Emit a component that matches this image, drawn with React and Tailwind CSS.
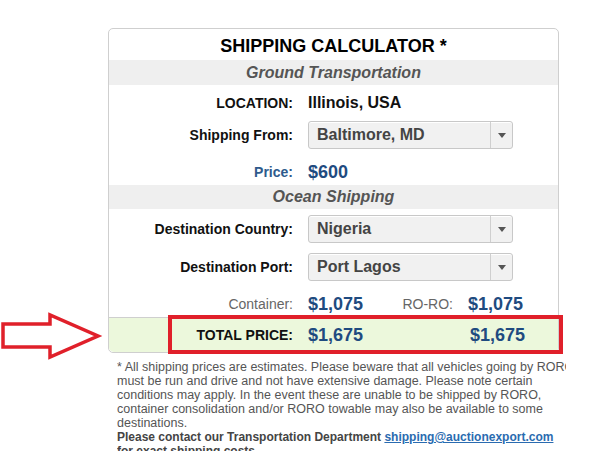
import React from "react";

function Select({ value }) {
  return (
    <div className="flex h-[28px] w-[205px] items-stretch rounded-[3px] border border-[#c8c8c8] bg-[#f1f1f1] shadow-[inset_0_1px_0_#fff]">
      <div className="flex flex-1 items-center pl-[8px] text-[16px] font-bold text-[#444]">{value}</div>
      <div className="flex w-[22px] items-center justify-center border-l border-[#cfcfcf]">
        <svg width="8" height="5" viewBox="0 0 8 5">
          <path d="M0 0 L8 0 L4 5 Z" fill="#555" />
        </svg>
      </div>
    </div>
  );
}

function Row({ label, labelClass, children, className }) {
  return (
    <div className={"flex items-center " + className}>
      <div className={"w-[184px] shrink-0 text-right " + labelClass}>{label}</div>
      <div className="ml-[15px] flex items-center">{children}</div>
    </div>
  );
}

const labelBold = "text-[14px] font-bold text-[#111]";
const money = "text-[18px] font-bold text-[#1f4b80]";

export default function App() {
  return (
    <div className="relative h-[462px] w-[595px] overflow-hidden bg-white font-['Liberation_Sans',Arial,sans-serif]">
      {/* red arrow annotation */}
      <svg className="absolute left-0 top-[305px]" width="104" height="60" viewBox="0 305 104 60">
        <path
          d="M3 324 L50 324 L50 315 L98 336 L50 357 L50 347 L3 347 Z"
          fill="#fff"
          stroke="#e0202a"
          strokeWidth="3.5"
        />
      </svg>

      <div className="ml-[108px] pt-[28px]">
        <div className="relative w-[451px] rounded-[5px] border border-[#cfcfcf]">
          <div className="flex h-[31px] items-center justify-center pt-[3px] text-[18px] font-bold text-black">
            SHIPPING CALCULATOR *
          </div>
          <div className="flex h-[25px] items-center justify-center bg-[#efefef] text-[16px] font-bold italic text-[#555]">
            Ground Transportation
          </div>

          <Row label="LOCATION:" labelClass={labelBold} className="mt-[8px] h-[20px]">
            <span className="text-[16px] font-bold text-[#111]">Illinois, USA</span>
          </Row>
          <Row label="Shipping From:" labelClass={labelBold} className="mt-[8px] h-[28px]">
            <Select value="Baltimore, MD" />
          </Row>
          <Row label="Price:" labelClass="text-[14px] font-bold text-[#2e5a8c]" className="mt-[12px] h-[22px]">
            <span className={money}>$600</span>
          </Row>

          <div className="mt-[2px] flex h-[24px] items-center justify-center bg-[#efefef] text-[16px] font-bold italic text-[#555]">
            Ocean Shipping
          </div>

          <Row label="Destination Country:" labelClass={labelBold} className="mt-[6px] h-[28px]">
            <Select value="Nigeria" />
          </Row>
          <Row label="Destination Port:" labelClass={labelBold} className="mt-[10px] h-[28px]">
            <Select value="Port Lagos" />
          </Row>

          <div className="mt-[12px] flex h-[22px] items-center">
            <div className="w-[184px] shrink-0 text-right text-[14px] text-[#666]">Container:</div>
            <div className={"ml-[15px] w-[89px] " + money}>$1,075</div>
            <div className="w-[56px] whitespace-nowrap text-right text-[14px] text-[#666]">RO-RO:</div>
            <div className={"ml-[15px] " + money}>$1,075</div>
          </div>

          <div className="mt-[2px] flex h-[35px] items-center rounded-b-[5px] border-t border-[#cfcfcf] bg-[#ecf8dc]">
            <div className="w-[184px] shrink-0 text-right text-[14px] font-bold text-[#111]">TOTAL PRICE:</div>
            <div className={"ml-[15px] w-[147px] " + money}>$1,675</div>
            <div className={"ml-[15px] " + money}>$1,675</div>
          </div>

          {/* red highlight annotation */}
          <div className="pointer-events-none absolute left-[59px] top-[286px] h-[39px] w-[395px] border-[4px] border-[#e0202a]" />
        </div>

        <div className="ml-[9px] mt-[7px] h-[91px] w-[449px] overflow-hidden">
          <div className="w-[465px] text-[12.5px] leading-[14px] text-[#555]">
            * All shipping prices are estimates. Please beware that all vehicles going by RORO must be run and drive and not have extensive damage. Please note certain conditions may apply. In the event these are unable to be shipped by RORO, container consolidation and/or RORO towable may also be available to some destinations.
            <br />
            <span className="text-[12px] font-bold text-[#444]">Please contact our Transportation Department </span>
            <span className="text-[12px] font-bold text-[#2a6bb0] underline">shipping@auctionexport.com</span>
            <br />
            <span className="text-[12px] font-bold text-[#444]">for exact shipping costs.</span>
          </div>
        </div>
      </div>
    </div>
  );
}
